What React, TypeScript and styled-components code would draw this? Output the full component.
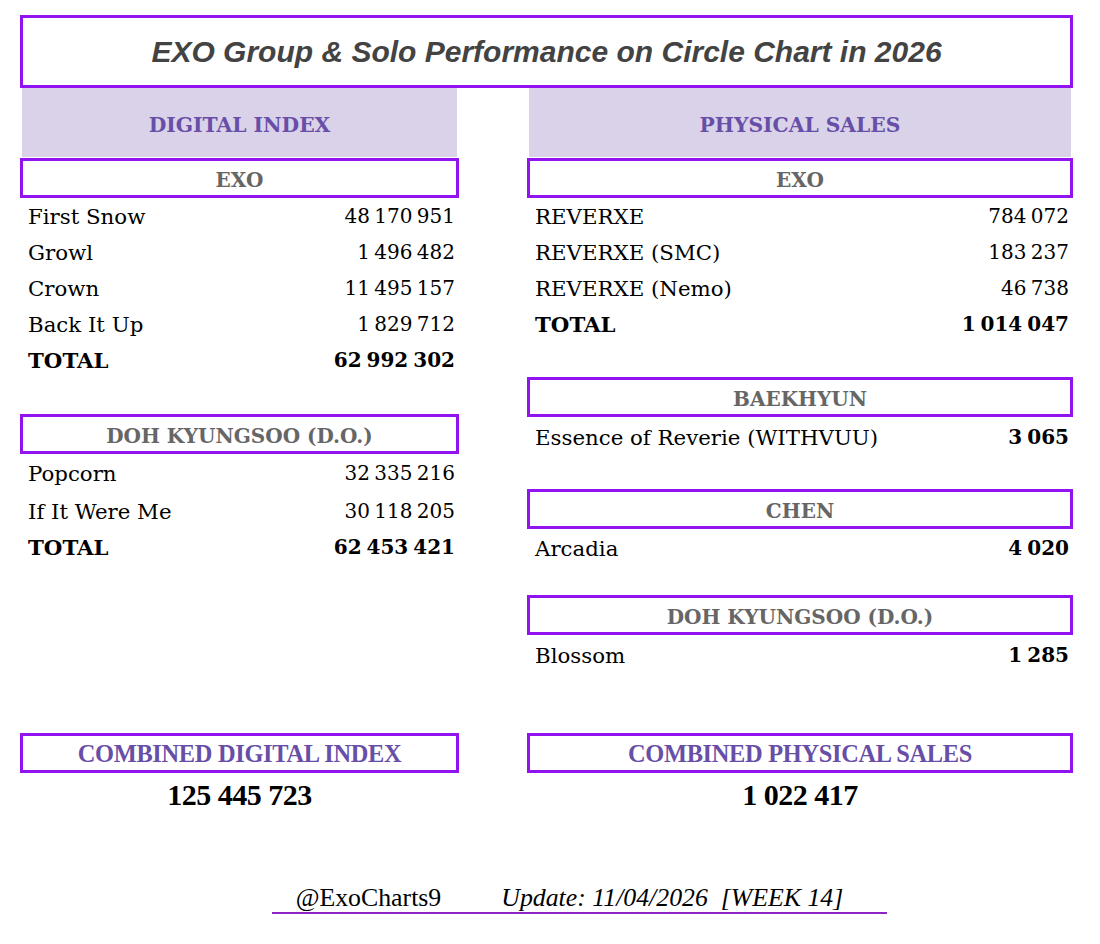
import React from "react";
import styled, { createGlobalStyle } from "styled-components";

const purple = "#9013f0";
const lavender = "#d9d2e9";
const headText = "#674ea7";
const gray = "#666666";

const GlobalStyle = createGlobalStyle`
  html, body {
    margin: 0;
    padding: 0;
    background: #ffffff;
  }
  body {
    font-family: "DejaVu Serif", "Liberation Serif", serif;
    color: #000;
  }
`;

const Page = styled.div`
  width: 1100px;
  height: 944px;
  box-sizing: border-box;
  padding: 15px 27px 0 20px;
  display: flex;
  flex-direction: column;
`;

const TitleBox = styled.div`
  height: 73px;
  box-sizing: border-box;
  border: 3px solid ${purple};
  display: flex;
  align-items: center;
  justify-content: center;
`;

const Title = styled.h1`
  margin: 0;
  font-family: "Liberation Sans", Arial, sans-serif;
  font-style: italic;
  font-weight: bold;
  font-size: 30px;
  color: #434343;
`;

const Columns = styled.div`
  display: grid;
  grid-template-columns: 439px 546px;
  column-gap: 68px;
  align-items: start;
`;

const Column = styled.div`
  display: flex;
  flex-direction: column;
`;

const SectionHeader = styled.div`
  height: 69px;
  box-sizing: border-box;
  padding-top: 5px;
  margin: 0 2px 1px;
  background: ${lavender};
  color: ${headText};
  font-weight: bold;
  font-size: 20.3px;
  display: flex;
  align-items: center;
  justify-content: center;
`;

const Group = styled.div<{ $gap?: number }>`
  margin-top: ${(p) => p.$gap ?? 0}px;
  display: flex;
  flex-direction: column;
`;

const GroupBox = styled.div`
  height: 40px;
  box-sizing: border-box;
  padding-top: 3px;
  border: 3px solid ${purple};
  color: ${gray};
  font-weight: bold;
  font-size: 20px;
  display: flex;
  align-items: center;
  justify-content: center;
`;

const Row = styled.div<{ $h?: number; $bold?: boolean }>`
  height: ${(p) => p.$h ?? 36}px;
  padding: 0 4px 0 8px;
  display: flex;
  align-items: center;
  justify-content: space-between;
  font-size: 21.3px;
  font-weight: ${(p) => (p.$bold ? "bold" : "normal")};
`;

const Value = styled.span<{ $bold?: boolean }>`
  font-size: 20px;
  word-spacing: -2px;
  font-weight: ${(p) => (p.$bold ? "bold" : "inherit")};
`;

const Combined = styled.div`
  margin-top: 58px;
  display: grid;
  grid-template-columns: 439px 546px;
  column-gap: 68px;
`;

const CombinedCell = styled.div`
  display: flex;
  flex-direction: column;
  align-items: center;
`;

const CombinedBox = styled.div`
  align-self: stretch;
  height: 40px;
  box-sizing: border-box;
  padding-top: 2px;
  border: 3px solid ${purple};
  color: ${headText};
  font-family: "Liberation Serif", serif;
  font-weight: bold;
  font-size: 24.4px;
  letter-spacing: -0.3px;
  display: flex;
  align-items: center;
  justify-content: center;
`;

const CombinedValue = styled.div`
  margin-top: 5px;
  font-family: "Liberation Serif", serif;
  font-weight: bold;
  font-size: 30px;
  letter-spacing: -0.5px;
`;

const Footer = styled.div`
  margin: 72px auto 0;
  width: 615px;
  box-sizing: border-box;
  padding: 0 20px 0 0;
  border-bottom: 2px solid #8e24c8;
  display: flex;
  justify-content: center;
  gap: 60px;
  font-family: "Liberation Serif", serif;
  font-size: 25.8px;
  line-height: 28px;
  transform: translateX(33px);
`;

const Handle = styled.span``;

const Update = styled.span`
  font-style: italic;
`;

type Item = [string, string];

const digitalExo: Item[] = [
  ["First Snow", "48 170 951"],
  ["Growl", "1 496 482"],
  ["Crown", "11 495 157"],
  ["Back It Up", "1 829 712"],
];

const digitalDo: Item[] = [
  ["Popcorn", "32 335 216"],
  ["If It Were Me", "30 118 205"],
];

const physicalExo: Item[] = [
  ["REVERXE", "784 072"],
  ["REVERXE (SMC)", "183 237"],
  ["REVERXE (Nemo)", "46 738"],
];

export default function App() {
  return (
    <>
      <GlobalStyle />
      <Page>
        <TitleBox>
          <Title>EXO Group &amp; Solo Performance on Circle Chart in 2026</Title>
        </TitleBox>

        <Columns>
          <Column>
            <SectionHeader>DIGITAL INDEX</SectionHeader>
            <Group>
              <GroupBox>EXO</GroupBox>
              {digitalExo.map(([n, v]) => (
                <Row key={n}>
                  <span>{n}</span>
                  <Value>{v}</Value>
                </Row>
              ))}
              <Row $bold>
                <span>TOTAL</span>
                <Value>62 992 302</Value>
              </Row>
            </Group>
            <Group $gap={36}>
              <GroupBox>DOH KYUNGSOO (D.O.)</GroupBox>
              {digitalDo.map(([n, v]) => (
                <Row key={n} $h={38}>
                  <span>{n}</span>
                  <Value>{v}</Value>
                </Row>
              ))}
              <Row $bold $h={34}>
                <span>TOTAL</span>
                <Value>62 453 421</Value>
              </Row>
            </Group>
          </Column>

          <Column>
            <SectionHeader>PHYSICAL SALES</SectionHeader>
            <Group>
              <GroupBox>EXO</GroupBox>
              {physicalExo.map(([n, v]) => (
                <Row key={n}>
                  <span>{n}</span>
                  <Value>{v}</Value>
                </Row>
              ))}
              <Row $bold>
                <span>TOTAL</span>
                <Value>1 014 047</Value>
              </Row>
            </Group>
            <Group $gap={35}>
              <GroupBox>BAEKHYUN</GroupBox>
              <Row $h={40}>
                <span>Essence of Reverie (WITHVUU)</span>
                <Value $bold>3 065</Value>
              </Row>
            </Group>
            <Group $gap={32}>
              <GroupBox>CHEN</GroupBox>
              <Row $h={38}>
                <span>Arcadia</span>
                <Value $bold>4 020</Value>
              </Row>
            </Group>
            <Group $gap={28}>
              <GroupBox>DOH KYUNGSOO (D.O.)</GroupBox>
              <Row $h={40}>
                <span>Blossom</span>
                <Value $bold>1 285</Value>
              </Row>
            </Group>
          </Column>
        </Columns>

        <Combined>
          <CombinedCell>
            <CombinedBox>COMBINED DIGITAL INDEX</CombinedBox>
            <CombinedValue>125 445 723</CombinedValue>
          </CombinedCell>
          <CombinedCell>
            <CombinedBox>COMBINED PHYSICAL SALES</CombinedBox>
            <CombinedValue>1 022 417</CombinedValue>
          </CombinedCell>
        </Combined>

        <Footer>
          <Handle>@ExoCharts9</Handle>
          <Update>Update: 11/04/2026&nbsp;&nbsp;[WEEK 14]</Update>
        </Footer>
      </Page>
    </>
  );
}
